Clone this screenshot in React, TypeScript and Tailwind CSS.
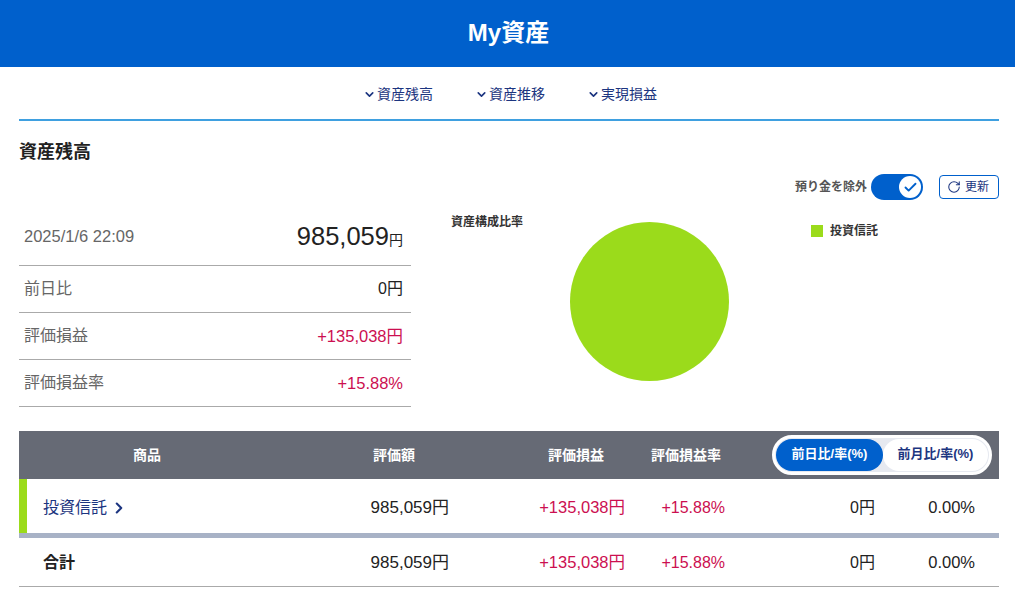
import React from 'react';
import { ChevronDown, ChevronRight, RotateCw, Check } from 'lucide-react';

const navItems = ['資産残高', '資産推移', '実現損益'];

const summaryRows = [
  { label: '前日比', value: '0円', red: false },
  { label: '評価損益', value: '+135,038円', red: true },
  { label: '評価損益率', value: '+15.88%', red: true },
];

const TableValues: React.FC = () => (
  <>
    <div className="w-[174px] text-right text-[17px] text-[#222]">985,059円</div>
    <div className="w-[176px] text-right text-[16.5px] text-[#cc0f50]">+135,038円</div>
    <div className="w-[100px] text-right text-[16px] text-[#cc0f50]">+15.88%</div>
    <div className="w-[150px] text-right text-[16px] text-[#222]">0円</div>
    <div className="w-[100px] text-right text-[16.5px] text-[#222]">0.00%</div>
  </>
);

export default function App() {
  return (
    <div className="min-h-[603px] bg-white font-['Liberation_Sans','Noto_Sans_CJK_JP',sans-serif] text-[#222]">
      <header className="flex h-[67px] items-center justify-center bg-[#0060cc] pb-[2px] pl-[2px] text-[24px] font-bold text-white">
        My資産
      </header>

      <div className="pr-[16px] pl-[19px]">
        <nav className="flex h-[54px] items-center justify-center gap-[42px] border-b-2 border-[#3fa0e0] pt-[2px] pl-[2px]">
          {navItems.map((item) => (
            <a key={item} className="flex w-[70px] items-center text-[14px] whitespace-nowrap text-[#1c3580]">
              <ChevronDown className="mr-[1px] h-[13px] w-[13px] shrink-0" strokeWidth={3} />
              {item}
            </a>
          ))}
        </nav>

        <h2 className="mt-[18px] text-[18px] leading-[26px] font-bold">資産残高</h2>

        <div className="mt-[8px] flex h-[28px] items-center justify-end">
          <span className="mr-[4px] text-[12px] font-bold text-[#555]">預り金を除外</span>
          <div className="flex h-[26px] w-[52px] items-center justify-end rounded-full bg-[#0060cc] pr-[2px]">
            <div className="flex h-[22px] w-[22px] items-center justify-center rounded-full bg-white">
              <Check className="h-[15px] w-[15px] text-[#0060cc]" strokeWidth={3} />
            </div>
          </div>
          <button className="ml-[16px] flex h-[24px] w-[60px] items-center justify-center gap-[4px] rounded-[4px] border border-[#0060cc] pr-[2px] text-[12px] text-[#1c3580]">
            <RotateCw className="h-[14px] w-[14px] text-[#1c3580]" strokeWidth={1.75} />
            更新
          </button>
        </div>

        <div className="mt-[7px] flex">
          <div className="w-[392px]">
            <div className="flex h-[58px] items-center justify-between border-b border-[#aaa] pr-[8px] pl-[5px]">
              <span className="text-[16.5px] text-[#666]">2025/1/6 22:09</span>
              <span className="flex items-baseline text-[25.5px] text-[#222]">
                985,059<span className="text-[14px]">円</span>
              </span>
            </div>
            {summaryRows.map((row) => (
              <div
                key={row.label}
                className="flex h-[47px] items-center justify-between border-b border-[#aaa] pr-[8px] pl-[5px]"
              >
                <span className="text-[16px] text-[#666]">{row.label}</span>
                <span className={row.red ? 'text-[16.5px] text-[#cc0f50]' : 'text-[16px] text-[#222]'}>{row.value}</span>
              </div>
            ))}
          </div>

          <div className="ml-[40px] w-[119px] pt-[6px] text-[12px] leading-[16px] font-bold text-[#333]">資産構成比率</div>
          <div className="pt-[14px]">
            <div className="h-[159px] w-[159px] rounded-full bg-[#9bdb1b]" />
          </div>
          <div className="mt-[16px] ml-[82px] flex h-[14px] items-center">
            <span className="h-[12px] w-[12px] bg-[#9bdb1b]" />
            <span className="ml-[7px] text-[12px] font-bold text-[#333]">投資信託</span>
          </div>
        </div>

        <div className="mt-[24px]">
          <div className="flex h-[48px] items-center bg-[#666a75] text-[14px] font-bold text-white">
            <div className="w-[256px] text-center">商品</div>
            <div className="w-[238px] text-center">評価額</div>
            <div className="w-[126px] text-center">評価損益</div>
            <div className="w-[94px] text-center">評価損益率</div>
            <div className="ml-[39px] flex h-[40px] w-[220px] items-center rounded-full border-[3px] border-white bg-[#e6e9f0] p-[1px]">
              <div className="flex h-[32px] w-[107px] items-center justify-center rounded-full bg-[#0060cc] pb-[2px] text-[13px]">
                前日比/率(%)
              </div>
              <div className="flex h-[32px] flex-1 items-center justify-center rounded-full bg-white pb-[2px] text-[13px] text-[#1c3580]">
                前月比/率(%)
              </div>
            </div>
          </div>

          <div className="flex h-[59px] items-center border-b-[5px] border-[#a8b2c6] pt-[3px]">
            <div className="-mt-[3px] flex h-[54px] w-[256px] items-center border-l-[8px] border-[#9bdb1b] pt-[3px] pl-[16px] text-[16px] text-[#1c3580]">
              投資信託
              <ChevronRight className="ml-[3px] h-[18px] w-[18px]" strokeWidth={2.75} />
            </div>
            <TableValues />
          </div>

          <div className="flex h-[49px] items-center border-b border-[#aaa] pt-[1px]">
            <div className="w-[256px] pl-[24px] text-[16px] font-bold">合計</div>
            <TableValues />
          </div>
        </div>
      </div>
    </div>
  );
}
